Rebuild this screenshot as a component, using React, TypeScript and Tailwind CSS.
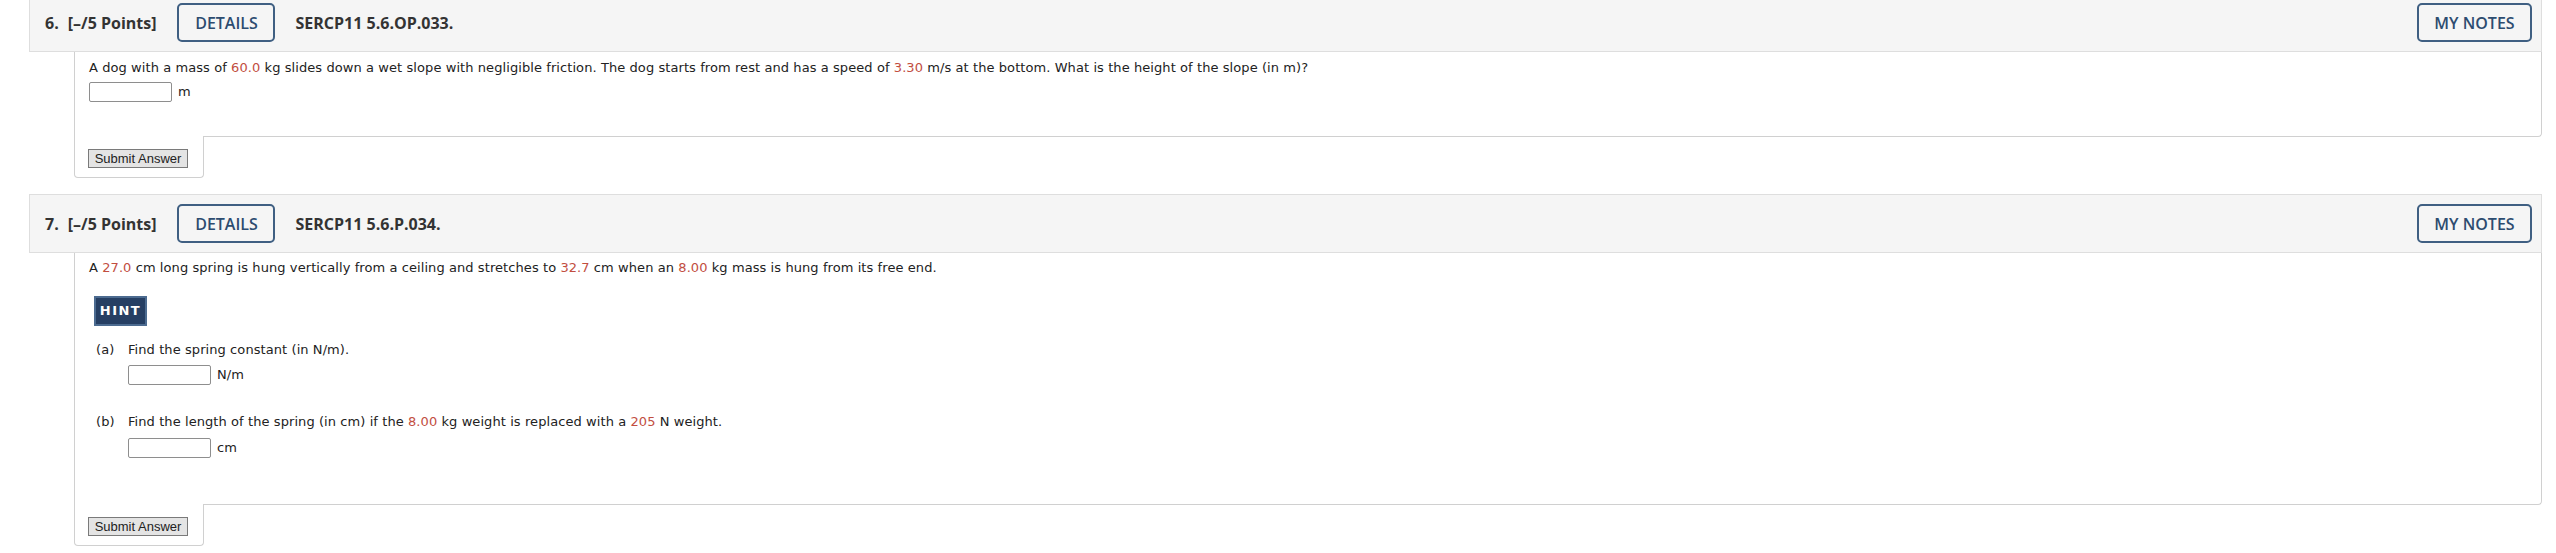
import React from 'react';

const Num: React.FC<{ children: React.ReactNode }> = ({ children }) => (
  <span className="text-[#c24e3f]">{children}</span>
);

const AnswerBox: React.FC<{ unit: string }> = ({ unit }) => (
  <div className="flex items-center">
    <input
      type="text"
      className="h-[20px] w-[83px] rounded-[2px] border border-[#8e8e8e] bg-white outline-none"
    />
    <span className="ml-[6px]">{unit}</span>
  </div>
);

interface HeaderProps {
  num: number;
  code: string;
}

const QuestionHeader: React.FC<HeaderProps> = ({ num, code }) => (
  <div className="flex h-[59px] items-center border border-[#dedede] bg-[#f5f5f5] pl-[15px] pr-[9px] font-['Open_Sans',sans-serif] text-[16px] text-[#333]">
    <span className="font-bold">{num}.</span>
    <span className="ml-[9px] font-bold">[–/5 Points]</span>
    <button className="ml-[21px] h-[39px] w-[98px] rounded-[5px] border-2 border-[#3f5f82] font-semibold text-[#2d4c70]">
      DETAILS
    </button>
    <span className="ml-[20px] font-bold">{code}</span>
    <button className="ml-auto h-[39px] w-[115px] rounded-[5px] border-2 border-[#3f5f82] font-semibold text-[#2d4c70]">
      MY NOTES
    </button>
  </div>
);

const SubmitTab: React.FC = () => (
  <div className="relative -mt-px ml-[45px] h-[42px] w-[130px] rounded-b-[4px] border-x border-b border-[#d0d0d0] bg-white pl-[13px] pt-[13px]">
    <button className="block h-[19px] w-[100px] border border-[#7a7a7a] bg-[#e4e4e4] font-['Liberation_Sans',sans-serif] text-[13px] leading-[16px] text-[#222]">
      Submit Answer
    </button>
  </div>
);

export default function App() {
  return (
    <div className="h-[553px] w-full overflow-hidden bg-white">
      <div className="-mt-[7px] ml-[29px] mr-[14px]">
        <QuestionHeader num={6} code="SERCP11 5.6.OP.033." />
        <div className="ml-[45px] rounded-br-[4px] border-x border-b border-[#d0d0d0] pb-[34px] pl-[14px] pt-[8px] font-['DejaVu_Sans',sans-serif] text-[13px] leading-[16px] tracking-[0.08px] text-[#222]">
          <p>
            A dog with a mass of <Num>60.0</Num> kg slides down a wet slope with negligible friction. The dog starts
            from rest and has a speed of <Num>3.30</Num> m/s at the bottom. What is the height of the slope (in m)?
          </p>
          <div className="mt-[6px]">
            <AnswerBox unit="m" />
          </div>
        </div>
        <SubmitTab />
      </div>

      <div className="ml-[29px] mr-[14px] mt-[16px]">
        <QuestionHeader num={7} code="SERCP11 5.6.P.034." />
        <div className="ml-[45px] rounded-br-[4px] border-x border-b border-[#d0d0d0] pb-[46px] pl-[14px] pt-[7px] font-['DejaVu_Sans',sans-serif] text-[13px] leading-[16px] tracking-[0.08px] text-[#222]">
          <p>
            A <Num>27.0</Num> cm long spring is hung vertically from a ceiling and stretches to <Num>32.7</Num> cm
            when an <Num>8.00</Num> kg mass is hung from its free end.
          </p>
          <div className="ml-[5px] mt-[20px] flex h-[30px] w-[53px] items-center justify-center border-2 border-[#4c6b90] bg-[#263f63] text-[13px] font-bold tracking-[1.5px] text-white">
            HINT
          </div>
          <div className="mt-[16px] grid grid-cols-[32px_1fr] pl-[7px]">
            <span>(a)</span>
            <span>Find the spring constant (in N/m).</span>
            <span />
            <div className="mt-[7px]">
              <AnswerBox unit="N/m" />
            </div>
          </div>
          <div className="mt-[29px] grid grid-cols-[32px_1fr] pl-[7px]">
            <span>(b)</span>
            <span>
              Find the length of the spring (in cm) if the <Num>8.00</Num> kg weight is replaced with a{' '}
              <Num>205</Num> N weight.
            </span>
            <span />
            <div className="mt-[8px]">
              <AnswerBox unit="cm" />
            </div>
          </div>
        </div>
        <SubmitTab />
      </div>
    </div>
  );
}
